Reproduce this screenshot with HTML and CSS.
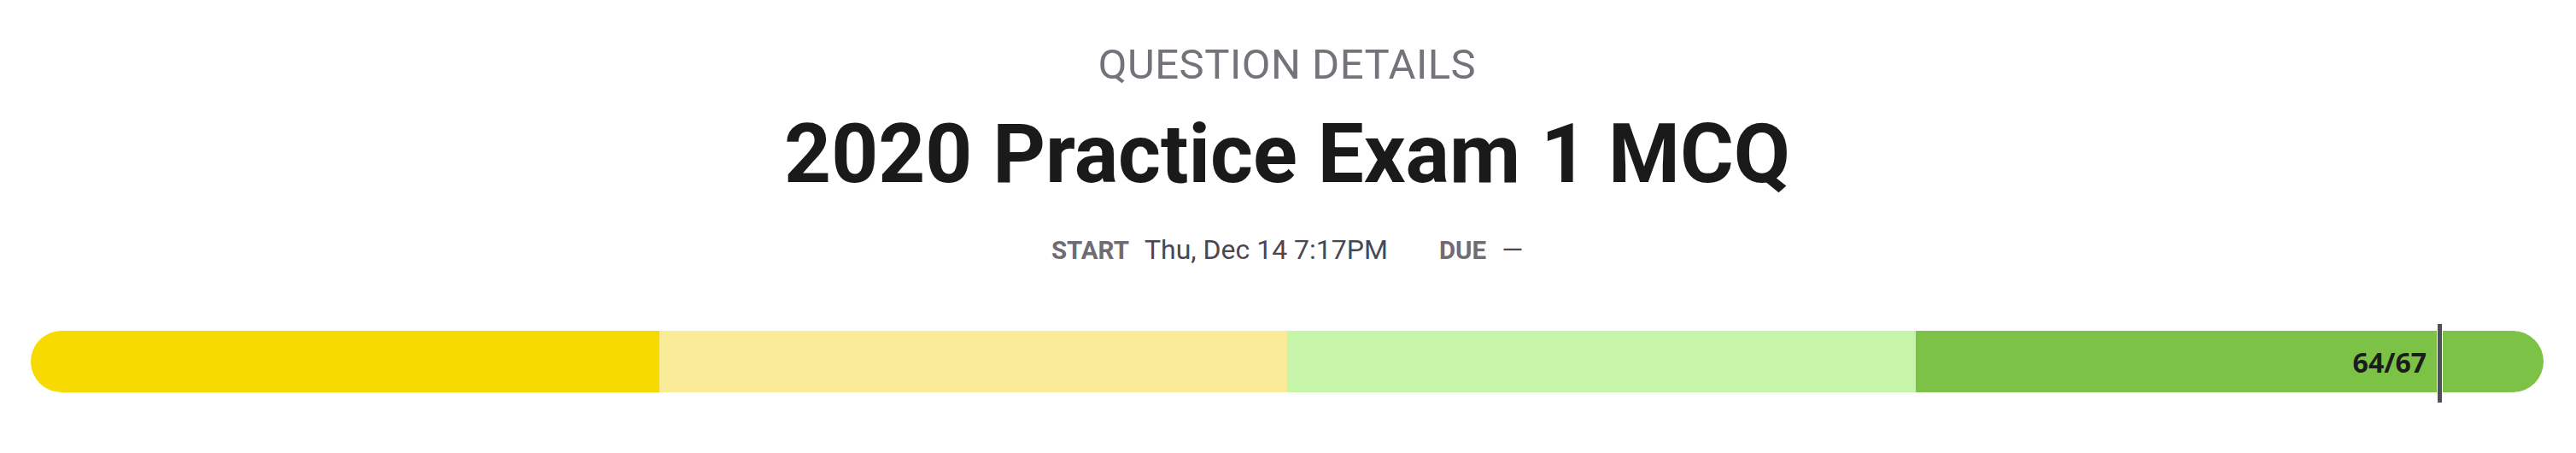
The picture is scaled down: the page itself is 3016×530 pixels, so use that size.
FILE: index.html
```html
<!DOCTYPE html>
<html>
<head>
<meta charset="utf-8">
<link rel="stylesheet" href="styles.css">
</head>
<body>
<div class="page">
  <header class="head">
    <div class="eyebrow">QUESTION DETAILS</div>
    <h1 class="title">2020 Practice Exam 1 MCQ</h1>
    <div class="meta">
      <span class="meta-item"><span class="meta-label">START</span><span class="meta-value">Thu, Dec 14 7:17PM</span></span>
      <span class="meta-item"><span class="meta-label">DUE</span><span class="meta-value">—</span></span>
    </div>
  </header>
  <div class="progress">
    <div class="bar">
      <div class="seg seg-1"></div>
      <div class="seg seg-2"></div>
      <div class="seg seg-3"></div>
      <div class="seg seg-4"></div>
    </div>
    <div class="marker" style="left: 2817px;"><span class="score">64/67</span></div>
  </div>
</div>
</body>
</html>
```
FILE: styles.css
```css
html, body {
  margin: 0;
  padding: 0;
  background: #ffffff;
}
.page {
  width: 3016px;
  height: 530px;
  box-sizing: border-box;
  padding: 44px 38px 0 36px;
  font-family: Roboto, "Liberation Sans", sans-serif;
}
.head {
  display: flex;
  flex-direction: column;
  align-items: center;
}
.eyebrow {
  font-size: 49px;
  line-height: 64px;
  color: #75727a;
  font-weight: 400;
  letter-spacing: 0.5px;
}
.title {
  margin: 16px 0 0 0;
  font-size: 96px;
  line-height: 112px;
  font-weight: 700;
  color: #1a1a1a;
}
.meta {
  margin-top: 36px;
  display: flex;
  gap: 60px;
  font-size: 32px;
  line-height: 40px;
}
.meta-item {
  display: flex;
  align-items: baseline;
  gap: 18px;
}
.meta-label {
  font-weight: 700;
  color: #6f6c74;
  font-size: 29.5px;
}
.meta-value {
  color: #4a4751;
}
.progress {
  position: relative;
  margin-top: 74px;
}
.bar {
  display: flex;
  height: 72px;
  border-radius: 36px;
  overflow: hidden;
}
.seg {
  flex: 1;
}
.seg-1 { background: #f7da00; }
.seg-2 { background: #faeb99; }
.seg-3 { background: #c6f5a9; }
.seg-4 { background: #7cc246; }
.marker {
  position: absolute;
  top: -8px;
  width: 5px;
  height: 92px;
  background: #505058;
  border-left: 1px solid #ffffff;
  border-right: 1px solid #ffffff;
}
.score {
  position: absolute;
  right: 18px;
  top: 8px;
  height: 72px;
  display: flex;
  align-items: center;
  font-family: "Open Sans", sans-serif;
  font-weight: 700;
  font-size: 32px;
  color: #1c1c1c;
  white-space: nowrap;
}
```
